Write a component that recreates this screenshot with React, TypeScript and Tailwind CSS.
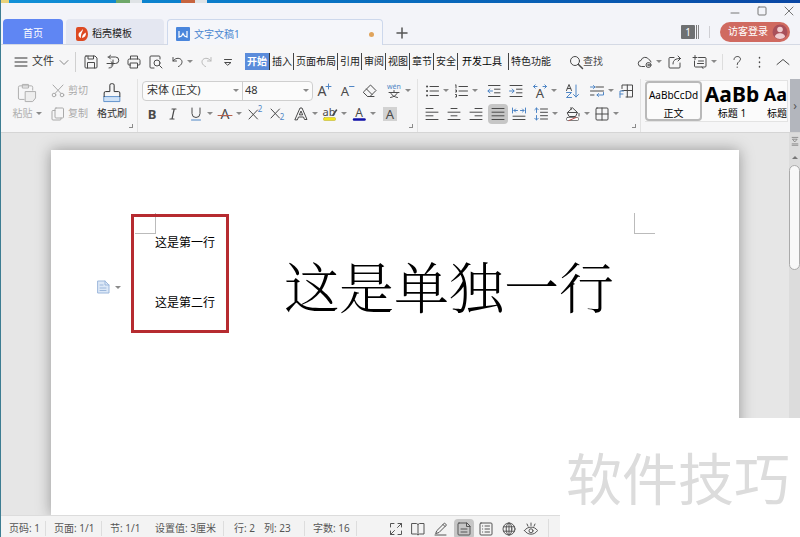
import { ReactNode } from "react";
import clsx from "clsx";

const BLUE = "#4f86c6";

function Icon({ children, size = "size-3.5" }: { children: ReactNode; size?: string }) {
  return (
    <svg
      className={clsx("shrink-0 overflow-visible", size)}
      viewBox="0 0 14 14"
      fill="none"
      stroke="currentColor"
      strokeWidth="1"
      strokeLinecap="round"
      strokeLinejoin="round"
    >
      {children}
    </svg>
  );
}

function Caret() {
  return <span className="border-x-[3px] border-t-[3px] border-x-transparent border-t-[#8a8a8a]" />;
}

function Glyph({ x = 7, y = 12, size = 13, fill = "#4a4a4a", bold = false, children }: any) {
  return (
    <text
      x={x}
      y={y}
      fontSize={size}
      fill={fill}
      stroke="none"
      textAnchor="middle"
      fontWeight={bold ? 700 : 400}
    >
      {children}
    </text>
  );
}

type ToolProps = {
  label: string;
  w: string;
  caret?: boolean;
  active?: boolean;
  className?: string;
  children: ReactNode;
};

function Tool({ label, w, caret, active, className, children }: ToolProps) {
  return (
    <div className={clsx("flex shrink-0 items-center", w)}>
      <button
        aria-label={label}
        className={clsx(
          "flex h-5 items-center gap-1",
          active && "-mx-[3px] rounded-sm bg-[#c6c6c6] px-[3px]",
          className,
        )}
      >
        <Icon>{children}</Icon>
        {caret && <Caret />}
      </button>
    </div>
  );
}

function Corner() {
  return <span className="absolute right-1 bottom-1 size-1 border-r border-b border-[#8a8a8a]" />;
}

const menus = ["插入", "页面布局", "引用", "审阅", "视图", "章节", "安全"];

function TitleBar() {
  return (
    <header className="flex h-[42px] shrink-0 items-end justify-between border-b border-[#d4d9e4] bg-[#f3f4f9]">
      <div className="flex h-[25px] items-stretch pl-0.5 text-[10px]">
        <button className="w-[60px] rounded-t-sm bg-[#5f86f3] pt-1 text-white">首页</button>
        <button className="ml-[3px] flex w-[98px] items-center gap-1 rounded-t-sm bg-[#e4e7f1] pt-1 pl-2.5 text-[#222]">
          <svg className="h-3.5 w-3" viewBox="0 0 12 14">
            <path d="M2 0h5a5 7 0 0 1 0 14H2a2 2 0 0 1-2-2V2a2 2 0 0 1 2-2z" fill="#dd4a22" />
            <path d="M6.8 2C7.200 5 4.400 6 5 11 3 10 2 8.500 2.700 6.500 3.500 5 5.500 4.500 6.800 2zM6 11c.2-2.500 1-4 3.800-5.500C10.300 8.500 9 10.500 6 11z" fill="#fff" />
          </svg>
          稻壳模板
        </button>
        <button className="-mb-px ml-[3px] flex w-[216px] items-center gap-1 rounded-t-sm border border-b-0 border-[#cdd8ec] bg-[#f5f6fa] px-2 pt-[3px] text-[#4a86d0]">
          <svg className="size-3.5" viewBox="0 0 14 14">
            <rect width="14" height="14" rx="1" fill="#4a86dc" />
            <path d="M3 4v6l2.500-1L7 6.500 8.500 9l2.500 1V4" fill="none" stroke="#fff" strokeWidth="1.200" />
          </svg>
          <span>文字文稿1</span>
          <span className="ml-auto size-[5px] rounded-full bg-[#e0a45c]" />
        </button>
        <button aria-label="新建" className="ml-3 pt-[3px] text-[#555]">
          <Icon>
            <path d="M7 2v10M2 7h10" strokeWidth="1.500" />
          </Icon>
        </button>
      </div>
      <div className="flex h-full flex-col items-end text-[#777]">
        <div className="flex h-4 items-center gap-[13px] pr-1">
          <button aria-label="最小化">
            <Icon>
              <path d="M3 9h8" />
            </Icon>
          </button>
          <button aria-label="最大化">
            <Icon>
              <rect x="3" y="3" width="8" height="8" rx="1" />
            </Icon>
          </button>
          <button aria-label="关闭">
            <Icon>
              <path d="M3 3l8 8M11 3l-8 8" />
            </Icon>
          </button>
        </div>
        <div className="flex h-[25px] items-center pr-2.5">
          <button className="flex h-3.5 items-stretch gap-px">
            <span className="w-3.5 rounded-[1px] bg-[#6e7072] text-center text-[10px] leading-[14px] text-white">1</span>
            <span className="w-px bg-[#777]" />
            <span className="w-px bg-[#888]" />
          </button>
          <span className="ml-2.5 h-3 w-px bg-[#cfcfd4]" />
          <button className="ml-2.5 flex h-5 w-[70px] items-center justify-between rounded-full bg-[#d06a60] pr-0.5 pl-2 text-[10px] text-white">
            访客登录
            <svg className="size-4" viewBox="0 0 16 16">
              <circle cx="8" cy="8" r="7.500" fill="#a9505a" />
              <circle cx="8" cy="5.500" r="2.800" fill="#f0cdd0" />
              <path d="M3 13c0-5 10-5 10 0-2.500 2.500-7.500 2.500-10 0z" fill="#f0cdd0" />
            </svg>
          </button>
        </div>
      </div>
    </header>
  );
}

function MenuBar() {
  return (
    <nav className="flex h-[33px] shrink-0 items-center bg-[#f6f6f7] text-[10px] text-[#4a4a4a]">
      <button className="ml-[13px] flex items-center gap-1 text-[11px] text-[#333]">
        <Icon>
          <path d="M1 3h12M1 7h12M1 11h12" />
        </Icon>
        文件
      </button>
      <button aria-label="文件菜单" className="ml-[3px] text-[#888]">
        <Icon>
          <path d="M3 5.500L7 9.500l4-4" />
        </Icon>
      </button>
      <span className="mr-2 ml-1 h-5 w-px bg-[#d0d0d0]" />
      <Tool label="保存" w="w-[22px]">
        <path d="M2 1h9l2 2v9a1 1 0 0 1-1 1H2a1 1 0 0 1-1-1V2a1 1 0 0 1 1-1zM4 1v3h5.500V1M3.500 13V7.500h7V13" />
      </Tool>
      <Tool label="输出" w="w-[21px]">
        <path d="M2 2h7.500a3.200 3.200 0 0 1 0 6.500H7M4.500 0.300L2.500 2l2 2M7 5v3.500C7 11 6 13 3 13M1 8.500h6M5 6.700L7 8.500l-2 2" />
      </Tool>
      <Tool label="打印" w="w-[22px]">
        <path d="M3.500 4V1h7v3M3.500 10H2a1 1 0 0 1-1-1V5.500A1.500 1.500 0 0 1 2.500 4h9A1.500 1.500 0 0 1 13 5.500V9a1 1 0 0 1-1 1h-1.500M3.500 8h7v5h-7z" />
      </Tool>
      <Tool label="打印预览" w="w-[22px]">
        <path d="M5 13H2a1 1 0 0 1-1-1V2a1 1 0 0 1 1-1h8a1 1 0 0 1 1 1v2M10.500 10.500L13 13" />
        <circle cx="8" cy="8" r="3" />
      </Tool>
      <Tool label="撤销" w="w-[28px]" caret className="gap-[2px]">
        <path d="M2 2.500V6h3.500M2 6c2-3 6-3.500 8-1.500s1 5.500-2.500 7" />
      </Tool>
      <Tool label="恢复" w="w-[23px]" className="text-[#b9b9b9]">
        <path d="M12 2.500V6H8.500M12 6c-2-3-6-3.500-8-1.500s-1 5.500 2.500 7" />
      </Tool>
      <Tool label="自定义" w="w-[23px]">
        <path d="M2.500 4.500h7M3 7.500h6L6 10z" />
      </Tool>
      <div className="flex items-stretch leading-[17px] whitespace-nowrap text-[#222]">
        <button className="border-r border-[#333] bg-[#5b8cdb] px-0.5 font-bold text-white">开始</button>
        {menus.map((m) => (
          <button key={m} className="border-r border-[#444] pr-px pl-0.5">
            {m}
          </button>
        ))}
        <button className="border-r border-[#444] pr-1.5 pl-1 text-black">开发工具</button>
        <button className="pl-0.5">特色功能</button>
      </div>
      <button className="ml-[18px] flex items-center whitespace-nowrap">
        <Icon>
          <circle cx="6" cy="6" r="4.500" />
          <path d="M9.500 9.500l4 4" strokeWidth="1.500" />
        </Icon>
        查找
      </button>
      <div className="ml-auto flex items-center pr-2.5">
        <Tool label="云同步" w="w-[30px]" caret>
          <path d="M6.500 11.500H3.500a3 3 0 0 1-.5-6 4.300 4.300 0 0 1 8-.8 2.800 2.800 0 0 1 2 2.300" />
          <circle cx="10.500" cy="10" r="2.500" />
          <circle cx="10.500" cy="10" r=".8" />
        </Tool>
        <Tool label="分享" w="w-[25px]">
          <path d="M6 2.500H2a1 1 0 0 0-1 1V12a1 1 0 0 0 1 1h9a1 1 0 0 0 1-1V8M5 9c0-4 2.500-5.500 7.500-5.500M10 1l2.500 2.500L10 6" />
        </Tool>
        <Tool label="批注" w="w-[29px]" caret>
          <path d="M5.500 2.500H12a1 1 0 0 1 1 1V11a1 1 0 0 1-1 1H2.500a1 1 0 0 1-1-1V6M0 2.500h4M2 .5v4M5.500 6h5M4.500 8.500h6M9 12l1 1.500" />
        </Tool>
        <span className="h-4 w-px bg-[#ddd]" />
        <Tool label="帮助" w="ml-[7px] w-[23px]">
          <path d="M4 4.500C4 .5 10.500.5 10.500 4.200 10.500 6.500 7.200 6.500 7.200 9.500M7.200 12v.5" />
        </Tool>
        <Tool label="更多" w="w-[23px]">
          <path d="M6.500 2.500v.5M6.500 7v.5M6.500 11.500v.5" strokeWidth="1.500" />
        </Tool>
        <Tool label="收起" w="w-3.5">
          <path d="M1 9.500l6-5 6 5" />
        </Tool>
      </div>
    </nav>
  );
}

function FontGroup() {
  return (
    <section className="relative w-[280px] shrink-0 border-r border-[#e2e2e2]">
      <div className="flex h-[23px] items-center pl-1">
        <div className="flex h-5 w-[171px] rounded-sm border border-[#cfcfcf] bg-[#fbfbfb] text-[11px] text-[#333]">
          <label className="relative flex w-[100px] items-center border-r border-[#cfcfcf]">
            <select aria-label="字体" className="w-full appearance-none pl-1 outline-none">
              <option>宋体 (正文)</option>
            </select>
            <span className="pointer-events-none absolute right-[3px] flex">
              <Caret />
            </span>
          </label>
          <label className="relative flex flex-1 items-center">
            <select aria-label="字号" className="w-full appearance-none pl-0.5 outline-none">
              <option>48</option>
            </select>
            <span className="pointer-events-none absolute right-[3px] flex">
              <Caret />
            </span>
          </label>
        </div>
        <span className="w-1" />
        <Tool label="增大字号" w="w-[23px]">
          <Glyph x={5} y={12} size={14}>A</Glyph>
          <path d="M11.500 0v5M9 2.500h5" stroke={BLUE} />
        </Tool>
        <Tool label="减小字号" w="w-[23px]">
          <Glyph x={5} y={12} size={13}>A</Glyph>
          <path d="M9.500 2.500H14" stroke={BLUE} />
        </Tool>
        <Tool label="清除格式" w="w-6">
          <path d="M.5 8l7-7 5.500 5.500-6 6H5zM3.500 5L9 10.500M5 12.500h6" />
        </Tool>
        <Tool label="拼音指南" w="w-6" caret>
          <Glyph y={5} size={7} fill={BLUE}>wén</Glyph>
          <path d="M7 6.500v1.500M2 8.500h10M4 9.500c1 2 3.500 3.500 6.500 4M10 9.500c-1 2-3.500 3.500-6.500 4" />
        </Tool>
      </div>
      <div className="flex h-[23px] items-center pl-[7px]">
        <Tool label="加粗" w="w-[21px]">
          <Glyph bold>B</Glyph>
        </Tool>
        <Tool label="倾斜" w="w-[23px]">
          <path d="M6 2h4M4 12h4M8.200 2L6 12" strokeWidth="1.200" />
        </Tool>
        <Tool label="下划线" w="w-[29px]" caret>
          <path d="M3 1v5.500a4 4 0 0 0 8 0V1" />
          <path d="M2.500 13h9" stroke={BLUE} />
        </Tool>
        <Tool label="删除线" w="w-[30px]" caret>
          <Glyph size={14}>A</Glyph>
          <path d="M0 8.500h14" stroke="#b5614d" />
        </Tool>
        <Tool label="上标" w="w-[22px]">
          <path d="M1 3l8.500 9M9.500 3L1 12" />
          <Glyph x={12} y={5} size={8} fill={BLUE}>2</Glyph>
        </Tool>
        <Tool label="下标" w="w-6">
          <path d="M1 2l8.500 9M9.500 2L1 11" />
          <Glyph x={12} y={13} size={8} fill={BLUE}>2</Glyph>
        </Tool>
        <Tool label="文字效果" w="w-[29px]" caret>
          <path d="M1 12.500L6 1h2l5 11.500h-2.500L9.500 10h-5l-1 2.500zM5.500 7.500L7 4l1.500 3.500z" />
        </Tool>
        <Tool label="突出显示" w="w-[29px]" caret>
          <Glyph x={6} y={9} size={11}>ab</Glyph>
          <path d="M13.500 3L10 8" strokeWidth="1.500" />
          <rect x="0.500" y="10.500" width="12" height="3" rx="1" fill="#f2e61c" stroke="#b6aa2c" strokeWidth=".5" />
        </Tool>
        <Tool label="字体颜色" w="w-[31px]" caret>
          <Glyph y={9.500} size={12}>A</Glyph>
          <path d="M2 12.500h10.500" stroke="#1111a8" strokeWidth="2.500" />
        </Tool>
        <Tool label="字符底纹" w="w-3.5">
          <rect width="14" height="14" fill="#d2d2d2" stroke="none" />
          <Glyph size={13}>A</Glyph>
        </Tool>
      </div>
      <Corner />
    </section>
  );
}

function ParagraphGroup() {
  return (
    <section className="relative w-[223px] shrink-0 border-r border-[#e2e2e2] pl-[7px]">
      <div className="flex h-[23px] items-center">
        <Tool label="项目符号" w="w-[29px]" caret>
          <path d="M5 2.500h8.500M5 7h8.500M5 11.500h8.500" />
          <path d="M2 2.500h.1M2 7h.1M2 11.500h.1" strokeWidth="2" />
        </Tool>
        <Tool label="编号" w="w-[33px]" caret>
          <path d="M5 2.500h8.500M5 7h8.500M5 11.500h8.500M1.500 1l.5-.3V4M1.500 6h1v2h-1M1.500 10.500h1v2.500h-1" />
        </Tool>
        <Tool label="减少缩进" w="w-[22px]">
          <path d="M1.500 1.500h11.500M7.500 5.200h5.500M7.500 8.800h5.500M1.500 12.500h11.500" />
          <path d="M5.500 7H1M2.800 5L1 7l1.800 2" stroke={BLUE} />
        </Tool>
        <Tool label="增加缩进" w="w-6">
          <path d="M1 1.500h12M7.500 5.200H13M7.500 8.800H13M1 12.500h12" />
          <path d="M.5 7H5M3.200 5L5 7 3.200 9" stroke={BLUE} />
        </Tool>
        <Tool label="中文版式" w="w-8" caret>
          <Glyph y={13.500} size={13}>A</Glyph>
          <path d="M4 2.500H.5M2.200.8L.5 2.500l1.700 1.700M10 2.500h3.500M11.800.8l1.700 1.700-1.700 1.700" stroke={BLUE} />
        </Tool>
        <Tool label="排序" w="w-[25px]">
          <path d="M1.500 6.500L4 .5l2.500 6M2.300 4.500h3.400" />
          <path d="M1.500 8.500h5l-5 5h5M11 1v12M8.500 10.500L11 13l2.500-2.500" stroke={BLUE} />
        </Tool>
        <Tool label="显示段落标记" w="w-[29px]" caret>
          <path d="M6 3h7.500M0.500 7h13M.5 11h3.500" />
          <path d="M0.500 3H5M3.500 1.500L5 3 3.500 4.500M13.500 8.500V11H7M8.500 9.500L7 11l1.500 1.500" stroke={BLUE} />
        </Tool>
        <Tool label="制表位" w="w-3.5">
          <path d="M3 4.500V1h10.500v12H7M8.300 1v12M3 6.500h10.500" />
          <path d="M1 13.500V7h3.500M1 10h3" stroke={BLUE} />
        </Tool>
      </div>
      <div className="flex h-[23px] items-center">
        <Tool label="左对齐" w="w-[22px]">
          <path d="M1 1.500h7M1 5.200h12M1 8.800h7M1 12.500h12" />
        </Tool>
        <Tool label="居中" w="w-[22px]">
          <path d="M4 1.500h6M1 5.200h12M4 8.800h6M1 12.500h12" />
        </Tool>
        <Tool label="右对齐" w="w-[22px]">
          <path d="M6 1.500h7M1 5.200h12M6 8.800h7M1 12.500h12" />
        </Tool>
        <Tool label="两端对齐" w="w-[21px]" active>
          <path d="M1 1.500h12M1 5.200h12M1 8.800h12M1 12.500h12" />
        </Tool>
        <Tool label="分散对齐" w="w-[22px]">
          <path d="M1 9.200h12M1 12.500h12" />
          <path d="M.5 1v5M13.500 1v5M2 3.500h3.500M3.500 2L2 3.500 3.500 5M12 3.500H8.500M10.500 2L12 3.500 10.500 5" stroke={BLUE} />
        </Tool>
        <Tool label="行距" w="w-8" caret>
          <path d="M6.500 2h7M6.500 5.300h7M6.500 8.700h7M6.500 12h7" />
          <path d="M2.500 1v4.500M2.500 8.500V13M.8 2.700L2.500 1l1.700 1.700M.8 11.300L2.500 13l1.700-1.700" stroke={BLUE} />
        </Tool>
        <Tool label="底纹颜色" w="w-[29px]" caret>
          <path d="M1.500 5.500L6.500.8 11.500 5.500 9.500 9.500H3.500zM2 5.500h9M13 6.500v2.500M5 2.500V.5" />
          <rect x="0.500" y="10.500" width="12" height="3" rx="1" fill="#fff" strokeWidth=".7" />
          <path d="M3 13.500l7-3" stroke="#c0504d" />
        </Tool>
        <Tool label="边框" w="w-6" caret>
          <rect x="1" y="1" width="12" height="12" rx="1" />
          <path d="M7 1v12M1 7h12" />
        </Tool>
      </div>
      <Corner />
    </section>
  );
}

function Ribbon() {
  return (
    <div className="flex h-[55px] shrink-0 items-stretch overflow-hidden border-b border-[#d5d5d5] bg-[#f6f6f7] pt-px text-[10px] text-[#4a4a4a]">
      <section className="relative flex w-[137px] shrink-0 border-r border-[#e2e2e2]">
        <button className="ml-2.5 flex w-8 flex-col items-center gap-[3px] pt-1 text-[#b0b0b0]">
          <Icon size="size-5">
            <path d="M5 11.500H2a1 1 0 0 1-1-1V3a1 1 0 0 1 1-1h8a1 1 0 0 1 1 1v2M4 1h4v2.500H4z" strokeWidth=".7" />
            <path d="M6 6h7v4.500L11 13H6z" strokeWidth=".7" fill="#eee" />
          </Icon>
          <span className="flex items-center gap-[3px] whitespace-nowrap">
            粘贴
            <Caret />
          </span>
        </button>
        <div className="ml-2 flex w-[46px] flex-col whitespace-nowrap text-[#aaa]">
          <button className="flex h-[23px] items-center gap-[3px]">
            <Icon>
              <path d="M2 1l8 8.500M12 1L4 9.500" />
              <circle cx="3" cy="11" r="1.800" />
              <circle cx="11" cy="11" r="1.800" />
            </Icon>
            剪切
          </button>
          <button className="flex h-[23px] items-center gap-[3px]">
            <Icon>
              <rect x="4" y="1" width="8.500" height="10" rx="1" />
              <path d="M4 3.500H2a1 1 0 0 0-1 1V12a1 1 0 0 0 1 1h7a1 1 0 0 0 1-1v-1" />
            </Icon>
            复制
          </button>
        </div>
        <button className="-ml-px flex w-8 flex-col items-center gap-[3px] pt-1 whitespace-nowrap text-[#333]">
          <Icon size="size-5">
            <path d="M1.500 9.500h11v3.500h-11z" fill="#cfe2f7" stroke={BLUE} strokeWidth=".6" />
            <path d="M1.500 9.500V7a1 1 0 0 1 1-1H5.500V1.500a1 1 0 0 1 1-1h1a1 1 0 0 1 1 1V6h3a1 1 0 0 1 1 1v2.500" strokeWidth=".7" />
          </Icon>
          格式刷
        </button>
        <Corner />
      </section>
      <FontGroup />
      <ParagraphGroup />
      <div className="my-px ml-1 flex h-[42px] min-w-0 flex-1 overflow-hidden border border-l-0 border-[#e3e3e3] bg-[#fbfbfb] whitespace-nowrap text-black">
        <button className="flex w-[57px] shrink-0 flex-col items-center rounded-sm border-2 border-[#b9b9b9]">
          <span className="text-[10px] leading-6">AaBbCcDd</span>
          <span className="leading-3">正文</span>
        </button>
        <button className="ml-0.5 flex w-14 shrink-0 flex-col items-center">
          <span className="text-[21px] leading-[26px] font-bold">AaBb</span>
          <span className="leading-3">标题 1</span>
        </button>
        <button className="flex min-w-0 flex-1 flex-col items-end">
          <span className="text-[18px] leading-[26px] font-bold">Aa</span>
          <span className="leading-3">标题</span>
        </button>
      </div>
      <button className="ml-0.5 w-2.5 shrink-0 bg-[#b3b6bd] text-[12px] text-[#555]">›</button>
    </div>
  );
}

function Document() {
  return (
    <main className="flex min-h-0 flex-1 bg-[#e6e6e6]">
      <div className="min-w-0 flex-1 overflow-hidden px-[50px] pt-[17px]">
        <article className="h-full bg-white pt-[63px] text-black shadow-[0_0_14px_rgba(0,0,0,0.35)]">
          <div className="flex h-[21px] justify-between px-[84px]">
            <span className="w-[21px] border-r border-b border-[#bbb]" />
            <span className="w-[21px] border-b border-l border-[#bbb]" />
          </div>
          <div className="flex h-[78px] pl-[46px] whitespace-nowrap">
            <button aria-label="段落布局" className="mt-[45px] flex h-4 w-[58px] items-center gap-1 text-[#9db8dc]">
              <Icon>
                <path d="M1 1h7l4 4v8H1z" fill="#dce8f7" />
                <path d="M8 1v4h4M3 5h3M3 8h6M3 10.500h6" />
              </Icon>
              <Caret />
            </button>
            <div className="relative flex flex-col justify-between text-[12px] leading-[18px]">
              <p>这是第一行</p>
              <p>这是第二行</p>
              <div className="absolute -top-5 -right-3.5 -bottom-[21px] -left-6 border-3 border-[#b62b30]" />
            </div>
            <p className="ml-[69px] self-end font-['Noto_Serif_CJK_SC','SimSun','Noto_Sans_CJK_SC',serif] text-[55px] leading-[54px] font-light">
              这是单独一行
            </p>
          </div>
        </article>
      </div>
      <div className="flex w-[11px] shrink-0 flex-col items-center bg-[#dcdcdc] text-[#777]">
        <button aria-label="标尺" className="h-4">
          <Icon size="size-2.5">
            <path d="M3 2h8M4 4.500h6L7 8zM3 11h8M3 13h8" />
          </Icon>
        </button>
        <button aria-label="向上滚动" className="flex h-4 items-center">
          <span className="border-x-[3px] border-b-[3px] border-x-transparent border-b-[#777]" />
        </button>
        <div className="h-[105px] w-full rounded-full border border-[#aaa] bg-[#f8f8f8]" />
      </div>
    </main>
  );
}

function StatusBar() {
  return (
    <footer className="flex h-[22px] shrink-0 items-center border-t border-[#dcdcdc] bg-[#f3f3f3] pt-1 text-[10px] whitespace-nowrap text-[#555]">
      <span className="w-[45px] border-r border-[#ddd] pl-2">页码: 1</span>
      <span className="w-14 border-r border-[#ddd] pl-2">页面: 1/1</span>
      <span className="w-[45px] pl-2">节: 1/1</span>
      <span className="w-[77px] border-r border-[#ddd] pl-2">设置值: 3厘米</span>
      <span className="w-8 pl-2.5">行: 2</span>
      <span className="w-[49px] border-r border-[#ddd] pl-2">列: 23</span>
      <span className="w-[52px] border-r border-[#ddd] pl-2">字数: 16</span>
      <div className="ml-8 flex items-center">
        <Tool label="全屏" w="w-[22px]">
          <path d="M5 1.500H1.500V5M9 1.500h3.500V5M5 12.500H1.500V9M9 12.500h3.500V9M8.500 5.500l4-4M5.500 8.500l-4 4" />
        </Tool>
        <Tool label="阅读版式" w="w-[23px]">
          <path d="M7 2.500v10M1 1.500h4.500L7 2.500l1.500-1H13v10.500H8.500L7 13l-1.500-1H1z" />
        </Tool>
        <Tool label="写作模式" w="w-[23px]">
          <path d="M3 8.500L10.500 1l2 2L5 10.500l-3 1zM9 2.500l2 2M1 13h11" />
        </Tool>
        <Tool label="页面视图" w="w-[22px]" active>
          <path d="M2 1h8l3 3v8a1 1 0 0 1-1 1H2a1 1 0 0 1-1-1V2a1 1 0 0 1 1-1zM9.500 1v3.500H13M4 7h6M4 10h6" />
        </Tool>
        <Tool label="大纲" w="w-[23px]">
          <rect x="1" y="1" width="12" height="12" rx="1" />
          <path d="M6 4h4.500M6 7h4.500M6 10h4.500M3.500 4h.2M3.500 7h.2M3.500 10h.2" />
        </Tool>
        <Tool label="Web 版式" w="w-[22px]">
          <circle cx="7" cy="7" r="6" />
          <ellipse cx="7" cy="7" rx="2.800" ry="6" />
          <path d="M1.500 4.800h11M1.500 9.200h11M7 1v12" />
        </Tool>
        <Tool label="护眼模式" w="w-[24px]">
          <path d="M.5 8.500c3-4.500 10-4.500 13 0-3 5-10 5-13 0zM7 1v2.500M3 2l1 2.200M11 2l-1 2.200" />
          <circle cx="7" cy="8.800" r="2" />
        </Tool>
        <span className="h-5 w-px bg-[#ddd]" />
      </div>
    </footer>
  );
}

export default function App() {
  return (
    <div className="relative flex h-screen flex-col overflow-hidden border-l border-[#3d7d92] font-['Noto_Sans','Noto_Sans_CJK_SC',sans-serif]">
      <div className="flex h-[3px] shrink-0 bg-linear-to-r from-[#1191d8] to-[#0a46a4]">
        <span className="w-2 bg-[#e9d27a]" />
        <span className="ml-[107px] w-3.5 bg-[#6fa86a]" />
        <span className="w-3 bg-[#dfe3e6]" />
        <span className="ml-[39px] w-3.5 bg-[#c7643f]" />
        <span className="w-3 bg-[#dfe3e6]" />
      </div>
      <TitleBar />
      <MenuBar />
      <Ribbon />
      <Document />
      <StatusBar />
      <div className="absolute right-0 bottom-0 flex h-[119px] w-60 items-center justify-center bg-white pr-1 text-[56px] whitespace-nowrap text-[#dcdcdc]">
        软件技巧
      </div>
    </div>
  );
}
